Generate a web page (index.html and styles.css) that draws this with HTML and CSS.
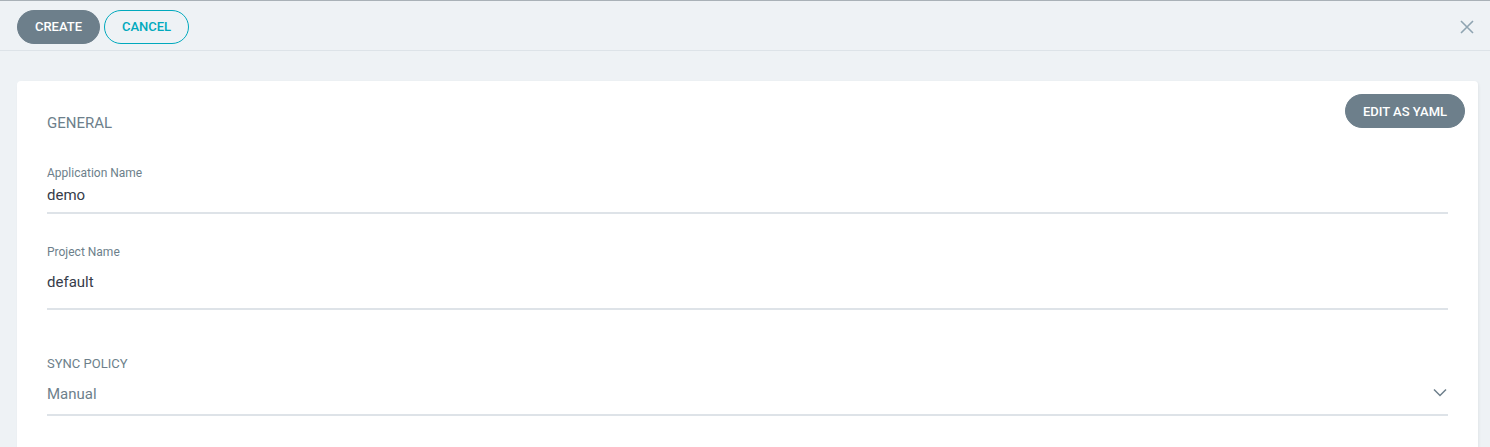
FILE: index.html
```html
<!DOCTYPE html>
<html lang="en">
<head>
<meta charset="utf-8">
<title>Create Application</title>
<link rel="stylesheet" href="styles.css">
</head>
<body>
<div class="panel">
  <header class="toolbar">
    <div class="actions">
      <button class="btn btn-primary">Create</button>
      <button class="btn btn-outline">Cancel</button>
    </div>
    <button class="close" aria-label="Close">
      <svg width="14" height="14" viewBox="0 0 14 14"><path d="M1 1 L13 13 M13 1 L1 13" stroke="#8fa4b1" stroke-width="1.6" fill="none"/></svg>
    </button>
  </header>
  <main class="content">
    <section class="card">
      <button class="btn btn-primary btn-yaml">Edit as YAML</button>
      <h3 class="section-title">General</h3>
      <div class="field field-app">
        <label class="field-label">Application Name</label>
        <div class="field-value">demo</div>
      </div>
      <div class="field field-project">
        <label class="field-label">Project Name</label>
        <div class="field-value">default</div>
      </div>
      <div class="field field-sync">
        <label class="field-label upper">Sync Policy</label>
        <div class="field-value select">
          <span>Manual</span>
          <svg width="14" height="9" viewBox="0 0 14 9"><path d="M1 1.5 L7 7.5 L13 1.5" stroke="#6d7f8b" stroke-width="1.5" fill="none"/></svg>
        </div>
      </div>
    </section>
  </main>
</div>
</body>
</html>
```

FILE: styles.css
```css
* { box-sizing: border-box; }
html, body { margin: 0; padding: 0; }
body {
  background: #eef2f5;
  font-family: Roboto, "Liberation Sans", sans-serif;
  height: 447px;
  overflow: hidden;
}
.panel {
  border-top: 1px solid #a9b1b7;
}
.toolbar {
  height: 50px;
  border-bottom: 1px solid #dde3e8;
  display: flex;
  align-items: center;
  justify-content: space-between;
  padding: 0 16px 0 17px;
}
.actions { display: flex; gap: 4px; padding-top: 2px; }
.btn {
  font-family: Roboto, "Liberation Sans", sans-serif;
  font-weight: 500;
  font-size: 13px;
  text-transform: uppercase;
  height: 34px;
  border-radius: 17px;
  padding: 0 18px;
  cursor: pointer;
  letter-spacing: 0;
}
.btn-primary {
  background: #6d7f8b;
  color: #fff;
  border: 1px solid #6d7f8b;
}
.btn-outline {
  background: transparent;
  color: #00a9bd;
  border: 1px solid #00a9bd;
}
.actions .btn-primary { width: 83px; padding: 0; }
.actions .btn-outline { width: 85px; padding: 0; }
.close {
  background: none;
  border: 0;
  padding: 0;
  display: flex;
  margin-top: 2px;
}
.content { padding: 30px 12px 0 17px; }
.card {
  position: relative;
  background: #fff;
  border-radius: 4px;
  box-shadow: 1px 1px 3px rgba(0,0,0,0.06);
  padding: 32px 30px 40px 30px;
}
.btn-yaml {
  position: absolute;
  top: 13px;
  right: 13px;
  width: 120px;
  padding: 0;
}
.section-title {
  margin: 0;
  font-size: 15px;
  font-weight: 400;
  line-height: 20px;
  color: #6d7f8b;
  text-transform: uppercase;
}
.field-label {
  display: block;
  font-size: 12px;
  line-height: 16px;
  color: #6d7f8b;
}
.field-label.upper { text-transform: uppercase; font-size: 13px; }
.field-value {
  font-size: 15px;
  line-height: 20px;
  color: #363c4a;
  border-bottom: 2px solid #dee3e8;
}
.field-app { margin-top: 32px; }
.field-app .field-value { margin-top: 4px; padding-bottom: 7px; }
.field-project { margin-top: 30px; }
.field-project .field-value { margin-top: 12px; padding-bottom: 16px; }
.field-sync { margin-top: 46px; }
.field-sync .field-value { margin-top: 12px; padding-bottom: 10px; }
.select {
  display: flex;
  align-items: center;
  justify-content: space-between;
  color: #6d7f8b;
  padding-right: 1px;
}
.select svg { margin-top: -4px; }
```
